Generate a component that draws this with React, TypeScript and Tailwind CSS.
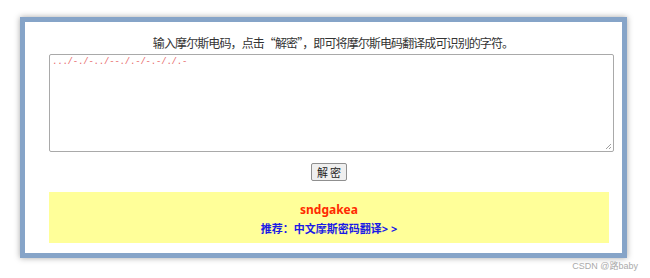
import React from "react";

export default function App() {
  return (
    <div className="w-[650px] h-[278px] bg-white relative overflow-hidden" style={{ fontFamily: '"Noto Sans", "Noto Sans CJK SC", sans-serif' }}>
      <div className="pt-[17px] pl-[20px]">
        <div className="w-[607px] h-[241px] border-[5px] border-[#86a4c8] bg-white shadow-[0_0_6px_rgba(0,0,0,0.35)] pl-[24px] pt-[13px]">
          <div className="w-[565px] flex flex-col">
            <div className="text-center text-[12px] leading-[16px] text-[#333] tracking-[-0.9px] pl-[3px]" style={{ fontFamily: '"Noto Sans CJK SC", sans-serif' }}>
              输入摩尔斯电码，点击“解密”，即可将摩尔斯电码翻译成可识别的字符。
            </div>
            <div className="mt-[3px] h-[98px] border border-[#a9a9a9] rounded-[2px] relative">
              <div className="pl-[2px] pt-[1px] text-[9px] leading-[12px] text-[#e86a6a] tracking-[-0.2px]" style={{ fontFamily: '"Liberation Mono", monospace' }}>
                .../-./-../--./.-/-.-/./.-
              </div>
              <svg className="absolute right-[1px] bottom-[1px]" width="7" height="7" viewBox="0 0 7 7">
                <path d="M6 1 L1 6 M6 4 L4 6" stroke="#888" strokeWidth="0.8" />
              </svg>
            </div>
            <div className="w-[560px] flex justify-center mt-[11px]">
              <button className="h-[18px] pl-[5px] pr-[3px] text-[11px] leading-[14px] text-[#222] bg-[#efefef] border border-[#8f8f8f] rounded-[2px] tracking-[2px]" style={{ fontFamily: '"Noto Sans CJK SC", sans-serif' }}>
                解密
              </button>
            </div>
            <div className="w-[560px] h-[51px] mt-[11px] bg-[#ffff99] flex flex-col items-center pt-[10px]">
              <div className="text-[12px] leading-[16px] font-bold text-[#ff2a00]">sndgakea</div>
              <div className="text-[11px] leading-[16px] font-bold text-[#1a1ae6] mt-[3px]">推荐：中文摩斯密码翻译&gt; &gt;</div>
            </div>
          </div>
        </div>
      </div>
      <div className="absolute right-[12px] top-[259px] text-[9px] leading-[14px] text-[#aaa]" style={{ fontFamily: '"Liberation Sans", "Noto Sans CJK SC", sans-serif' }}>
        CSDN @路baby
      </div>
    </div>
  );
}
